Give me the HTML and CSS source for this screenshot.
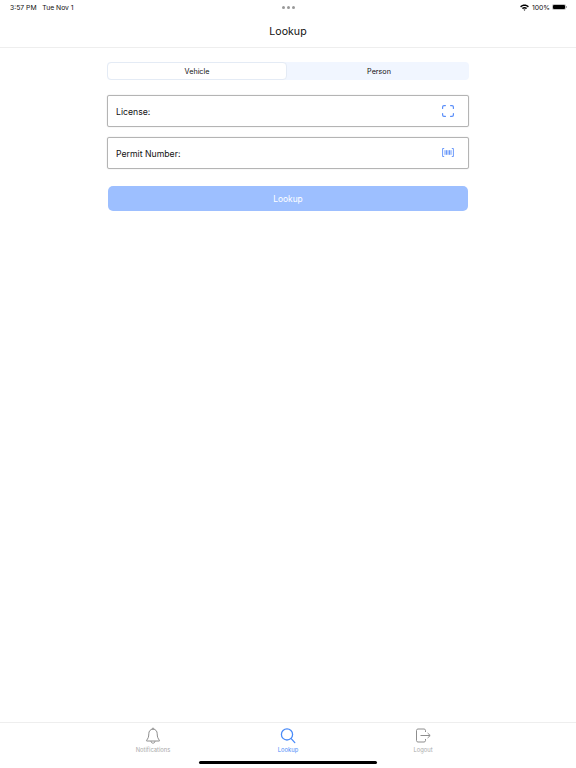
FILE: index.html

```html
<!DOCTYPE html>
<html lang="en">
<head>
  <meta charset="UTF-8">
  <title>Lookup</title>
  <link rel="stylesheet" href="styles.css">
</head>
<body>

  <div class="status-bar">
    <div class="status-time">3:57 PM&nbsp;&nbsp; Tue Nov 1</div>
    <div class="status-dots"><span></span><span></span><span></span></div>
    <div class="status-right">
      <svg class="wifi" width="9" height="7" viewBox="0 0 10 8">
        <path d="M0 2.7C2.8 0 7.2 0 10 2.7L8.9 3.9C6.7 1.8 3.3 1.8 1.1 3.9Z" fill="#000"/>
        <path d="M2 4.7C3.7 3.1 6.3 3.1 8 4.7L6.9 5.8C5.8 4.8 4.2 4.8 3.1 5.8Z" fill="#000"/>
        <path d="M3.9 6.6C4.5 6.1 5.5 6.1 6.1 6.6L5 7.8Z" fill="#000"/>
      </svg>
      <span>100%</span>
      <div class="battery"><div class="battery-fill"></div></div>
      <div class="battery-cap"></div>
    </div>
  </div>

  <div class="nav-bar">Lookup</div>

  <div class="content">
    <div class="segments">
      <div class="segment active">Vehicle</div>
      <div class="segment person">Person</div>
    </div>

    <div class="field">
      <span class="field-label">License:</span>
      <svg width="12" height="12" viewBox="0 0 12 12" fill="none" stroke="#5b8ff9" stroke-width="1.2" stroke-linecap="round">
        <path d="M.6 3.4V2C.6 1.2 1.2 .6 2 .6H3.4"/>
        <path d="M8.6 .6H10C10.8 .6 11.4 1.2 11.4 2V3.4"/>
        <path d="M11.4 8.6V10C11.4 10.8 10.8 11.4 10 11.4H8.6"/>
        <path d="M3.4 11.4H2C1.2 11.4 .6 10.8 .6 10V8.6"/>
      </svg>
    </div>

    <div class="field">
      <span class="field-label">Permit Number:</span>
      <svg class="barcode" width="12" height="9" viewBox="0 0 12 9" fill="none" stroke="#5b8ff9" stroke-width=".9">
        <path d="M2.2 .5H.6V8.5H2.2"/>
        <path d="M9.8 .5H11.4V8.5H9.8"/>
        <path d="M3 2.2V6.8M4.5 2.2V6.8M6 2.2V6.8M7.5 2.2V6.8M9 2.2V6.8"/>
      </svg>
    </div>

    <button class="lookup-button">Lookup</button>
  </div>

  <div class="tab-bar">
    <div class="tab">
      <svg width="16" height="17" viewBox="0 0 16 17" fill="none" stroke="#8e8e8e" stroke-width="1">
        <path d="M8 2.2C5.3 2.2 3.8 4.2 3.8 6.8C3.8 10.2 2.9 11.6 1.6 13.3V14H14.4V13.3C13.1 11.6 12.2 10.2 12.2 6.8C12.2 4.2 10.7 2.2 8 2.2Z"/>
        <path d="M7 2.2C7 .6 9 .6 9 2.2"/>
        <path d="M6 14.2C6 16.8 10 16.8 10 14.2"/>
      </svg>
      <span>Notifications</span>
    </div>
    <div class="tab active">
      <svg width="16" height="17" viewBox="0 0 16 17" fill="none" stroke="#4a8bf8" stroke-width="1.3" stroke-linecap="round">
        <circle cx="7" cy="7.4" r="5.6"/>
        <path d="M11.2 11.6L14.8 15.6"/>
      </svg>
      <span>Lookup</span>
    </div>
    <div class="tab">
      <svg width="16" height="17" viewBox="0 0 16 17" fill="none" stroke="#8e8e8e" stroke-width="1">
        <path d="M10.5 5V3.4C10.5 2.6 9.9 2 9.1 2H2.9C2.1 2 1.5 2.6 1.5 3.4V13.6C1.5 14.4 2.1 15 2.9 15H9.1C9.9 15 10.5 14.4 10.5 13.6V12"/>
        <path d="M5.5 8.5H15"/>
        <path d="M12.6 6L15.2 8.5L12.6 11"/>
      </svg>
      <span>Logout</span>
    </div>
  </div>

  <div class="home-indicator"></div>

</body>
</html>
```

FILE: styles.css

```css
* {
  box-sizing: border-box;
}

body {
  margin: 0;
  width: 576px;
  height: 768px;
  font-family: 'Inter', 'Liberation Sans', sans-serif;
  background: #fff;
  color: #000;
  display: flex;
  flex-direction: column;
  position: relative;
  overflow: hidden;
}

.status-bar {
  height: 14px;
  padding: 0 9px 0 10px;
  display: grid;
  grid-template-columns: 1fr auto 1fr;
  align-items: center;
  font-size: 6.8px;
  color: #111;
}

.status-dots {
  display: flex;
  gap: 2px;
}

.status-dots span {
  width: 3px;
  height: 3px;
  border-radius: 50%;
  background: #999;
}

.status-right {
  display: flex;
  align-items: center;
  justify-content: flex-end;
  gap: 2px;
}

.wifi {
  margin-right: 1px;
}

.battery {
  width: 14px;
  height: 6px;
  padding: 1px;
  border-radius: 2px;
  background: #c4c4c4;
}

.battery-fill {
  height: 100%;
  background: #000;
  border-radius: 1px;
}

.battery-cap {
  width: 1px;
  height: 2px;
  margin-left: -2px;
  background: #aaa;
}

.nav-bar {
  height: 34px;
  padding-top: 1px;
  display: flex;
  align-items: center;
  justify-content: center;
  font-size: 10.6px;
  color: #111;
  border-bottom: 1px solid #eeeeee;
}

.content {
  flex: 1;
  width: 362px;
  margin: 0 auto;
  padding-top: 14px;
  display: flex;
  flex-direction: column;
}

.segments {
  height: 18px;
  display: flex;
  background: #f1f6ff;
  border-radius: 4px;
  margin-bottom: 15px;
}

.segment {
  flex: 1;
  display: flex;
  align-items: center;
  justify-content: center;
  font-size: 7.2px;
  color: #111;
}

.segment.active {
  flex: 0 0 180px;
  background: #fff;
  border: 1px solid #e4ebf5;
  border-radius: 4px;
}

.segment.person {
  padding-left: 2px;
}

.field {
  height: 32px;
  margin-bottom: 10px;
  padding: 0 14px 0 8px;
  display: flex;
  align-items: center;
  justify-content: space-between;
  border: 1px solid #b4b4b4;
  border-radius: 2px;
  box-shadow: 0 0 1px #bbb;
  font-size: 8.7px;
  color: #111;
}

.field-label {
  padding-top: 2px;
}

.barcode {
  margin-bottom: 1px;
}

.lookup-button {
  height: 25px;
  margin: 7px 1px 0;
  border: none;
  border-radius: 5px;
  background: #9dbfff;
  color: #fff;
  font-family: inherit;
  font-size: 8.4px;
}

.tab-bar {
  height: 46px;
  border-top: 1px solid #eeeeee;
  display: flex;
  justify-content: center;
}

.tab {
  width: 135px;
  padding-top: 4px;
  display: flex;
  flex-direction: column;
  align-items: center;
  gap: 2px;
  font-size: 5.8px;
  color: #aaa;
}

.tab.active {
  color: #4a8bf8;
}

.home-indicator {
  position: absolute;
  left: 199px;
  bottom: 4px;
  width: 178px;
  height: 3px;
  border-radius: 2px;
  background: #000;
}
```
